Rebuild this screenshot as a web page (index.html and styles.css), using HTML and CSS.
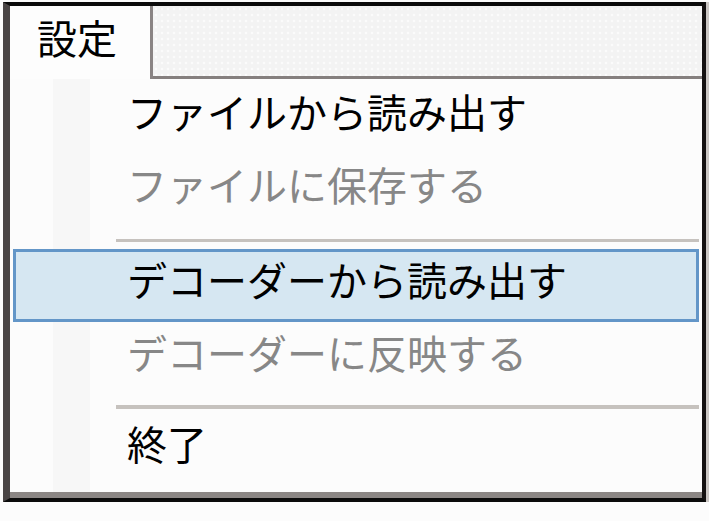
FILE: index.html
```html
<!DOCTYPE html>
<html lang="ja">
<head>
<meta charset="utf-8">
<title>設定メニュー</title>
<link rel="stylesheet" href="styles.css">
</head>
<body>
<div class="frame">
  <div class="menubar">
    <div class="tab">設定</div>
    <div class="bar-fill"></div>
  </div>
  <div class="menu">
    <div class="item item-first">ファイルから読み出す</div>
    <div class="item disabled">ファイルに保存する</div>
    <div class="sep sep-a"></div>
    <div class="item hover">デコーダーから読み出す</div>
    <div class="item disabled">デコーダーに反映する</div>
    <div class="sep sep-b"></div>
    <div class="item">終了</div>
  </div>
  <div class="statusbar"></div>
</div>
</body>
</html>
```
FILE: styles.css
```css
html, body {
  margin: 0;
  padding: 0;
  background: #fcfcfc;
}
body {
  width: 709px;
  height: 521px;
  padding: 2px 0 0 3px;
  box-sizing: border-box;
  font-family: "Noto Sans CJK JP", "Noto Sans", sans-serif;
  overflow: hidden;
}
.frame {
  width: 703px;
  height: 500px;
  box-sizing: border-box;
  border-top: 4px solid #0b0b0b;
  border-left: 7px solid #4a4545;
  border-right: 4px solid #141111;
  border-bottom: 4px solid #0b0b0b;
  box-shadow: 3px 0 0 #cbc7c4;
  display: flex;
  flex-direction: column;
  background: #fcfcfc;
}
.menubar {
  display: flex;
  height: 73px;
  flex: none;
}
.tab {
  width: 143px;
  box-sizing: border-box;
  border-right: 3px solid #898383;
  background: #fdfdfd;
  font-size: 40px;
  line-height: 62px;
  padding-left: 27px;
  color: #000;
}
.bar-fill {
  flex: 1;
  border-bottom: 3px solid #857f7e;
  background-color: #f3f3f3;
  background-image: radial-gradient(circle, #fbfbfb 1.2px, transparent 1.6px);
  background-size: 6px 6px;
}
.menu {
  flex: 1;
  padding-top: 2px;
  background-image: linear-gradient(to right, transparent 43px, #f7f7f7 43px, #f7f7f7 80px, transparent 80px);
}
.item {
  height: 73px;
  box-sizing: border-box;
  margin: 0 3px;
  border: 3px solid transparent;
  padding: 0 0 13px 111px;
  font-size: 40px;
  line-height: 54px;
  color: #000;
  white-space: nowrap;
}
.item.disabled {
  color: #878787;
}
.item.hover {
  background: #d6e7f2;
  border-color: #6396c8;
}
.sep {
  height: 3px;
  margin-left: 106px;
  margin-right: 3px;
  background: #c6c2be;
}
.sep-a {
  margin-top: 12px;
  margin-bottom: 7px;
}
.sep-b {
  height: 4px;
  margin-top: 10px;
  margin-bottom: 4px;
}
.statusbar {
  height: 6px;
  flex: none;
  background: #8b8684;
}
```
